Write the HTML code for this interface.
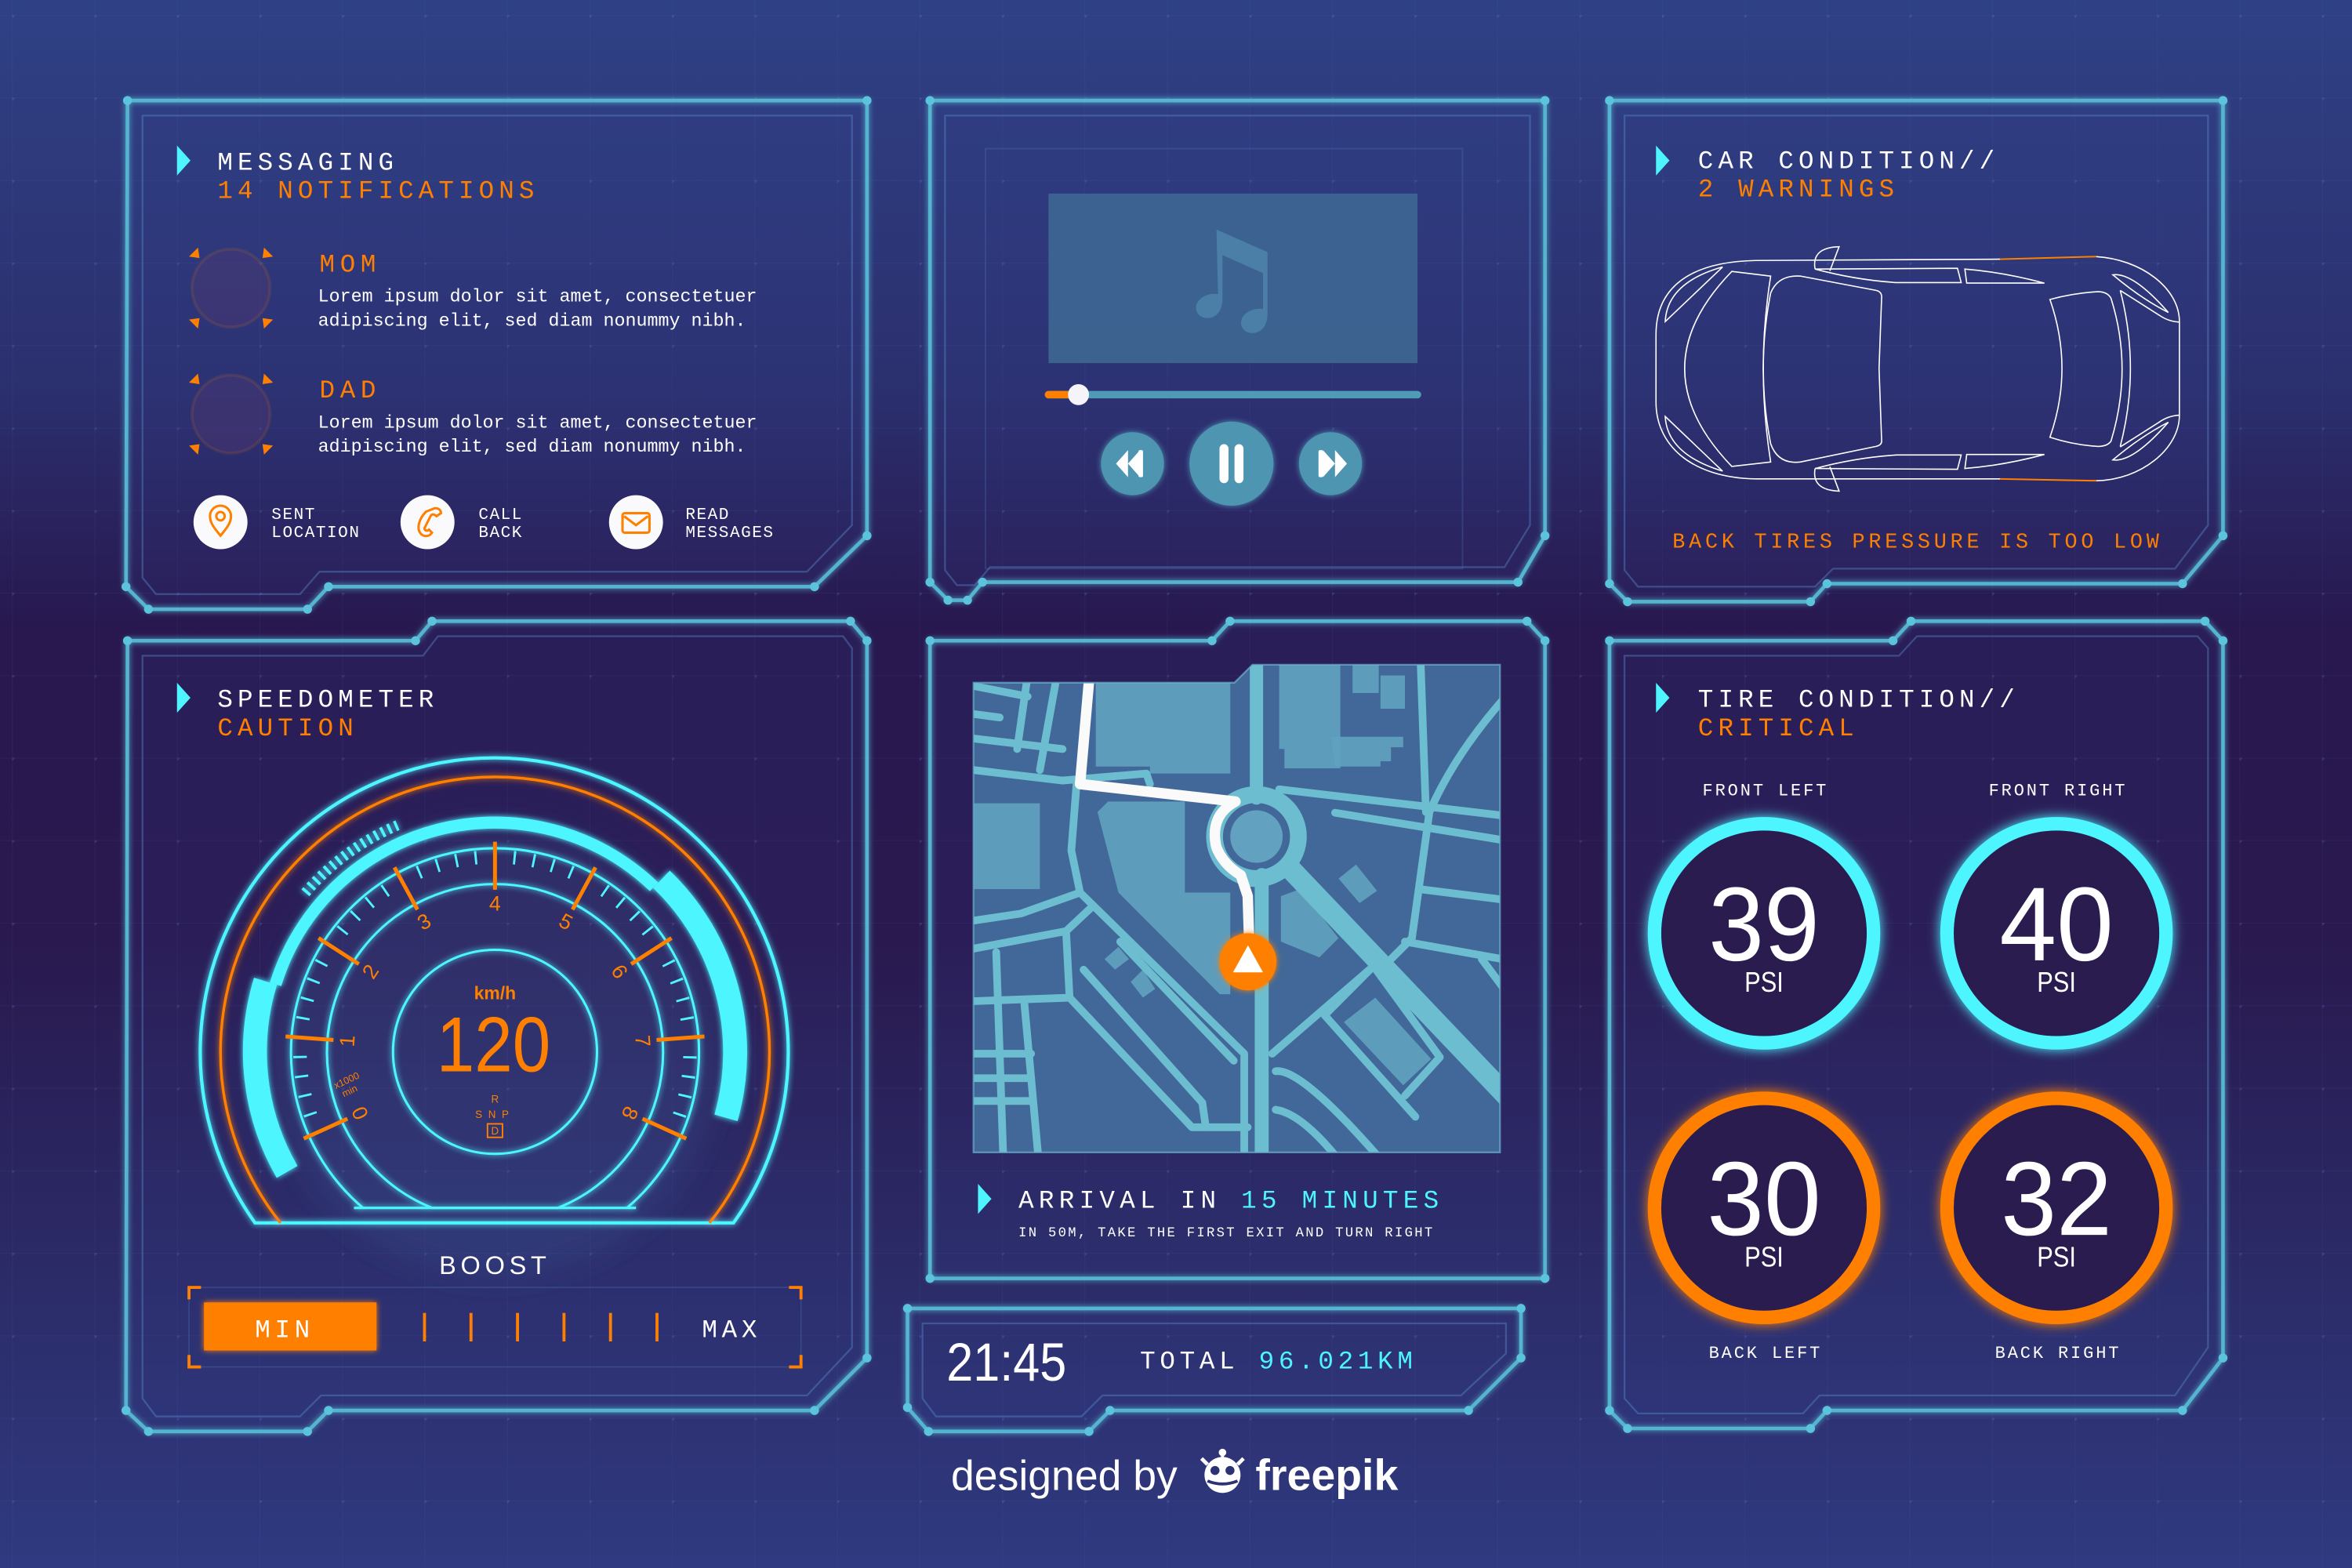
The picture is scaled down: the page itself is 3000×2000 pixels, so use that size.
<!DOCTYPE html>
<html><head><meta charset="utf-8"><style>
html,body{margin:0;padding:0;background:#2c2a66;}
svg{display:block}
.m{font-family:"Liberation Mono",monospace;}
.s{font-family:"Liberation Sans","DejaVu Sans",sans-serif;}
</style></head><body>
<svg width="3000" height="2000" viewBox="0 0 1568 1045" preserveAspectRatio="none" xmlns="http://www.w3.org/2000/svg">
<defs>
<linearGradient id="bg" x1="0" y1="0" x2="0" y2="1">
<stop offset="0" stop-color="#2f4185"/><stop offset="0.25" stop-color="#2b2f6e"/><stop offset="0.4" stop-color="#28184f"/><stop offset="0.6" stop-color="#29194f"/><stop offset="0.8" stop-color="#2b2a66"/><stop offset="1" stop-color="#2f3a80"/>
</linearGradient>
<pattern id="grid" width="55" height="55" patternUnits="userSpaceOnUse" x="8" y="10">
<path d="M0 0H55M0 0V55" stroke="#5f7fd0" stroke-opacity="0.08" stroke-width="1" fill="none"/>
<circle cx="0" cy="0" r="1.8" fill="#7a9ae0" fill-opacity="0.18"/>
</pattern>
<filter id="glow" x="-30%" y="-30%" width="160%" height="160%"><feGaussianBlur stdDeviation="4" result="b"/><feMerge><feMergeNode in="b"/><feMergeNode in="SourceGraphic"/></feMerge></filter>
<filter id="glow2" x="-30%" y="-30%" width="160%" height="160%"><feGaussianBlur stdDeviation="2" result="b"/><feMerge><feMergeNode in="b"/><feMergeNode in="SourceGraphic"/></feMerge></filter>
<filter id="soft"><feGaussianBlur stdDeviation="10"/></filter>
</defs>
<rect width="1568" height="1045" fill="url(#bg)"/>
<rect width="1568" height="1045" fill="url(#grid)"/>

<g fill="#3a4a9a" fill-opacity="0.12">
<path d="M85,67H578V357L543,391H219L205,406H99L84,391Z"/>
<path d="M620,67H1030V357L1012,388H655L645,400H632L620,388Z"/>
<path d="M1073,67H1482V357L1455,389H1218L1207,401H1085L1073,389Z"/>
<path d="M85,427H277L288,414H567L578,427V905L543,940H219L205,954H99L84,940Z"/>
<path d="M620,427H808L820,414H1018L1030,427V852H620Z"/>
<path d="M1073,427H1262L1274,414H1470L1482,427V905L1455,940H1218L1207,952H1085L1073,940Z"/>
<path d="M605,872H1014V905L979,940H740L726,954H619L605,938Z"/>
</g>
<g fill="none" stroke="#55b5d0" stroke-width="2.4" filter="url(#glow2)">
<path d="M85,67H578V357L543,391H219L205,406H99L84,391Z"/>
<path d="M620,67H1030V357L1012,388H655L645,400H632L620,388Z"/>
<path d="M1073,67H1482V357L1455,389H1218L1207,401H1085L1073,389Z"/>
<path d="M85,427H277L288,414H567L578,427V905L543,940H219L205,954H99L84,940Z"/>
<path d="M620,427H808L820,414H1018L1030,427V852H620Z"/>
<path d="M1073,427H1262L1274,414H1470L1482,427V905L1455,940H1218L1207,952H1085L1073,940Z"/>
<path d="M605,872H1014V905L979,940H740L726,954H619L605,938Z"/>
</g>
<g fill="none" stroke="#5a8fd0" stroke-opacity="0.4" stroke-width="1.2">
<path d="M95,77H568V350L538,381H213L200,396H104L95,385Z"/>
<path d="M630,77H1020V350L1003,378H660L650,390H638L630,380Z"/>
<path d="M1083,77H1472V350L1450,379H1222L1210,391H1092L1083,380Z"/>
<path d="M95,437H282L292,424H562L568,432V898L538,930H214L200,944H104L95,932Z"/>
<path d="M615,882H1004V902L974,930H735L721,944H624L615,932Z"/>
<path d="M1083,437H1266L1278,424H1465L1472,432V898L1450,930H1213L1202,942H1092L1083,932Z"/>
</g>
<g fill="#5cc3dc">
<circle cx="85" cy="67" r="3"/><circle cx="578" cy="67" r="3"/><circle cx="578" cy="357" r="3"/><circle cx="543" cy="391" r="3"/><circle cx="219" cy="391" r="3"/><circle cx="205" cy="406" r="3"/><circle cx="99" cy="406" r="3"/><circle cx="84" cy="391" r="3"/>
<circle cx="620" cy="67" r="3"/><circle cx="1030" cy="67" r="3"/><circle cx="1030" cy="357" r="3"/><circle cx="1012" cy="388" r="3"/><circle cx="655" cy="388" r="3"/><circle cx="645" cy="400" r="3"/><circle cx="632" cy="400" r="3"/><circle cx="620" cy="388" r="3"/>
<circle cx="1073" cy="67" r="3"/><circle cx="1482" cy="67" r="3"/><circle cx="1482" cy="357" r="3"/><circle cx="1455" cy="389" r="3"/><circle cx="1218" cy="389" r="3"/><circle cx="1207" cy="401" r="3"/><circle cx="1085" cy="401" r="3"/><circle cx="1073" cy="389" r="3"/>
<circle cx="85" cy="427" r="3"/><circle cx="277" cy="427" r="3"/><circle cx="288" cy="414" r="3"/><circle cx="567" cy="414" r="3"/><circle cx="578" cy="427" r="3"/><circle cx="578" cy="905" r="3"/><circle cx="543" cy="940" r="3"/><circle cx="219" cy="940" r="3"/><circle cx="205" cy="954" r="3"/><circle cx="99" cy="954" r="3"/><circle cx="84" cy="940" r="3"/>
<circle cx="620" cy="427" r="3"/><circle cx="808" cy="427" r="3"/><circle cx="820" cy="414" r="3"/><circle cx="1018" cy="414" r="3"/><circle cx="1030" cy="427" r="3"/><circle cx="1030" cy="852" r="3"/><circle cx="620" cy="852" r="3"/>
<circle cx="1073" cy="427" r="3"/><circle cx="1262" cy="427" r="3"/><circle cx="1274" cy="414" r="3"/><circle cx="1470" cy="414" r="3"/><circle cx="1482" cy="427" r="3"/><circle cx="1482" cy="905" r="3"/><circle cx="1455" cy="940" r="3"/><circle cx="1218" cy="940" r="3"/><circle cx="1207" cy="952" r="3"/><circle cx="1085" cy="952" r="3"/><circle cx="1073" cy="940" r="3"/>
<circle cx="605" cy="872" r="3"/><circle cx="1014" cy="872" r="3"/><circle cx="1014" cy="905" r="3"/><circle cx="979" cy="940" r="3"/><circle cx="740" cy="940" r="3"/><circle cx="726" cy="954" r="3"/><circle cx="619" cy="954" r="3"/><circle cx="605" cy="938" r="3"/>
</g>

<!-- MESSAGING -->
<path d="M118,97L127,107L118,117Z" fill="#4ef5ff"/>
<g class="m" font-size="17" letter-spacing="3.2">
<text x="145" y="113" fill="#fff">MESSAGING</text>
<text x="145" y="132" fill="#ff8000">14 NOTIFICATIONS</text>
</g>
<g>
<circle cx="154" cy="192" r="26" fill="#5a3a70" fill-opacity="0.35" stroke="#ff8000" stroke-opacity="0.12" stroke-width="2"/>
<circle cx="154" cy="276" r="26" fill="#5a3a70" fill-opacity="0.35" stroke="#ff8000" stroke-opacity="0.12" stroke-width="2"/>
<g fill="#ff8000">
<path d="M126,171l6,-6l1,7z"/><path d="M182,171l-6,-6l-1,7z"/><path d="M126,213l6,6l1,-7z"/><path d="M182,213l-6,6l-1,-7z"/>
<path d="M126,255l6,-6l1,7z"/><path d="M182,255l-6,-6l-1,7z"/><path d="M126,297l6,6l1,-7z"/><path d="M182,297l-6,6l-1,-7z"/>
</g>
</g>
<g class="m">
<text x="213" y="181" fill="#ff8000" font-size="17" letter-spacing="3.5">MOM</text>
<text x="212" y="201" fill="#fff" font-size="12.2">Lorem ipsum dolor sit amet, consectetuer</text>
<text x="212" y="217" fill="#fff" font-size="12.2">adipiscing elit, sed diam nonummy nibh.</text>
<text x="213" y="265" fill="#ff8000" font-size="17" letter-spacing="3.5">DAD</text>
<text x="212" y="285" fill="#fff" font-size="12.2">Lorem ipsum dolor sit amet, consectetuer</text>
<text x="212" y="301" fill="#fff" font-size="12.2">adipiscing elit, sed diam nonummy nibh.</text>
</g>
<g fill="#fafafc">
<circle cx="147" cy="348" r="18"/><circle cx="285" cy="348" r="18"/><circle cx="424" cy="348" r="18"/>
</g>
<g fill="none" stroke="#ff8000" stroke-width="1.6">
<path d="M147,357C142,351 140,348 140,344A7,7 0 0 1 154,344C154,348 152,351 147,357Z"/><circle cx="147" cy="344" r="2.8"/>
<path d="M289,339C292,338 294,340 294,342L291,344C290,343 288,342 287,344L283,352C283,354 285,354 286,353L288,355C286,358 282,358 280,355C278,352 279,346 284,341Z"/>
<rect x="415" y="342" width="18" height="13" rx="1.5"/><path d="M416,344L424,350L432,344"/>
</g>
<g class="m" font-size="11" fill="#fff" letter-spacing="0.8">
<text x="181" y="346">SENT</text><text x="181" y="358">LOCATION</text>
<text x="319" y="346">CALL</text><text x="319" y="358">BACK</text>
<text x="457" y="346">READ</text><text x="457" y="358">MESSAGES</text>
</g>

<!-- MUSIC -->
<rect x="657" y="99" width="318" height="280" fill="none" stroke="#5a7fc8" stroke-opacity="0.25"/>
<rect x="699" y="129" width="246" height="113" fill="#3e6794" fill-opacity="0.9"/>
<path d="M811,153L845,168V209C845,218 840,222 835,222C829,222 826,217 828,212C830,208 836,205 842,206V182L815,170V199C815,208 810,212 805,212C799,212 796,207 798,202C800,198 806,195 812,196Z" fill="#4b7fa8"/>
<line x1="699" y1="263" x2="945" y2="263" stroke="#4f9bb5" stroke-width="5" stroke-linecap="round"/>
<line x1="699" y1="263" x2="716" y2="263" stroke="#ff8000" stroke-width="5" stroke-linecap="round"/>
<circle cx="719" cy="263" r="7" fill="#f4f4fa"/>
<g fill="#4d95b1" filter="url(#glow2)">
<circle cx="755" cy="309" r="21"/><circle cx="821" cy="309" r="28"/><circle cx="887" cy="309" r="21"/>
</g>
<g fill="#fff">
<rect x="813" y="296" width="6" height="26" rx="3"/><rect x="823" y="296" width="6" height="26" rx="3"/>
<path d="M744,309L752,300V318Z"/><path d="M752,309L760,300V318Z" /><rect x="759" y="300" width="3" height="18" rx="1"/>
<path d="M898,309L890,300V318Z"/><path d="M890,309L882,300V318Z"/><rect x="879" y="300" width="3" height="18" rx="1"/>
</g>

<!-- CAR -->
<path d="M1104,97L1113,107L1104,117Z" fill="#4ef5ff"/>
<g class="m" font-size="17" letter-spacing="3.2">
<text x="1132" y="112" fill="#fff">CAR CONDITION//</text>
<text x="1132" y="131" fill="#ff8000">2 WARNINGS</text>
</g>
<g transform="translate(1104,171) scale(0.2466,0.1733) translate(-110,-80)" fill="none" stroke="#fff" stroke-width="1.6">
<path vector-effect="non-scaling-stroke" d="M1040,90L380,95C200,100 110,200 110,380L110,640C110,800 200,930 380,935L1040,935"/>
<path vector-effect="non-scaling-stroke" d="M1300,80C1420,90 1525,200 1525,330L1525,690C1525,820 1420,940 1300,942"/>
<path vector-effect="non-scaling-stroke" d="M1040,90L1300,80M1040,935L1300,942" stroke="#ff8000" stroke-width="2"/>
<path vector-effect="non-scaling-stroke" d="M500,155L705,210Q720,215 720,235L713,510L720,790Q720,805 705,810L500,870Q440,880 420,800Q380,510 420,220Q440,150 500,155Z"/>
<path vector-effect="non-scaling-stroke" d="M315,137L420,155Q380,510 420,870L315,887Q60,510 315,137Z"/>
<path vector-effect="non-scaling-stroke" d="M290,120L135,330Q140,180 290,120Z"/>
<path vector-effect="non-scaling-stroke" d="M290,905L135,695Q140,840 290,905Z"/>
<path vector-effect="non-scaling-stroke" d="M540,128L925,125L935,180L760,180Q650,170 540,128Z"/>
<path vector-effect="non-scaling-stroke" d="M945,128Q1050,140 1160,182L950,182Z"/>
<path vector-effect="non-scaling-stroke" d="M540,895L925,898L935,843L760,843Q650,853 540,895Z"/>
<path vector-effect="non-scaling-stroke" d="M945,895Q1050,883 1160,841L950,841Z"/>
<path vector-effect="non-scaling-stroke" d="M540,128Q530,45 605,42L580,135"/>
<path vector-effect="non-scaling-stroke" d="M540,895Q530,978 605,982L580,888"/>
<path vector-effect="non-scaling-stroke" d="M1175,245Q1240,220 1305,215Q1330,215 1340,240Q1400,510 1340,790Q1330,810 1305,810Q1240,805 1175,775Q1240,510 1175,245Z"/>
<path vector-effect="non-scaling-stroke" d="M1365,210Q1420,510 1365,810"/>
<path vector-effect="non-scaling-stroke" d="M1345,150Q1400,140 1495,295Q1420,240 1345,150Z"/>
<path vector-effect="non-scaling-stroke" d="M1345,862Q1400,872 1495,717Q1420,772 1345,862Z"/>
<path vector-effect="non-scaling-stroke" d="M1365,210L1470,305Q1495,330 1525,332"/>
<path vector-effect="non-scaling-stroke" d="M1365,812L1470,717Q1495,692 1525,690"/>
</g>
<text class="m" x="1115" y="365" fill="#ff8000" font-size="14" letter-spacing="2.5">BACK TIRES PRESSURE IS TOO LOW</text>

<!-- SPEEDOMETER -->
<path d="M118,455L127,465L118,475Z" fill="#4ef5ff"/>
<g class="m" font-size="17" letter-spacing="3.2">
<text x="145" y="471" fill="#fff">SPEEDOMETER</text>
<text x="145" y="490" fill="#ff8000">CAUTION</text>
</g>
<circle cx="330" cy="701" r="150" fill="#3b5a9c" fill-opacity="0.25" filter="url(#soft)"/>
<g fill="none" filter="url(#glow2)">
<path d="M170,815A196,196 0 1 1 489,815Z" stroke="#4ef5ff" stroke-width="2.2"/>
<path d="M187,815A183,183 0 1 1 473,815" stroke="#ff8000" stroke-width="1.8"/>
<path d="M183.7,656A153,153 0 0 1 436,591" stroke="#4ef5ff" stroke-width="8"/>
<path d="M191.4,781A160,160 0 0 1 177,654" stroke="#4ef5ff" stroke-width="16"/>
<path d="M441,586A160,160 0 0 1 484,745" stroke="#4ef5ff" stroke-width="16"/>
<path d="M203.6,595A165,165 0 0 1 265,550" stroke="#4ef5ff" stroke-width="7" stroke-dasharray="2 3"/>
<path d="M236,805L242,805A136,136 0 1 1 418,805L424,805Z" stroke="#4ef5ff" stroke-width="1.6"/>
<path d="M288,805A112,112 0 1 1 372,805Z" stroke="#4ef5ff" stroke-width="1.6"/>
<circle cx="330" cy="701" r="68" stroke="#4ef5ff" stroke-width="1.6"/>
</g>
<path d="M211.6,754.7A130,130 0 1 1 448.4,754.7" fill="none" stroke="#4ef5ff" stroke-width="9" stroke-dasharray="1.5 11.48" stroke-dashoffset="0.75"/>
<g stroke="#ff8000" stroke-width="2.6">
<line x1="330" y1="561" x2="330" y2="593" transform="rotate(-114.4 330 701)"/>
<line x1="330" y1="561" x2="330" y2="593" transform="rotate(-85.8 330 701)"/>
<line x1="330" y1="561" x2="330" y2="593" transform="rotate(-57.2 330 701)"/>
<line x1="330" y1="561" x2="330" y2="593" transform="rotate(-28.6 330 701)"/>
<line x1="330" y1="561" x2="330" y2="593" transform="rotate(0 330 701)"/>
<line x1="330" y1="561" x2="330" y2="593" transform="rotate(28.6 330 701)"/>
<line x1="330" y1="561" x2="330" y2="593" transform="rotate(57.2 330 701)"/>
<line x1="330" y1="561" x2="330" y2="593" transform="rotate(85.8 330 701)"/>
<line x1="330" y1="561" x2="330" y2="593" transform="rotate(114.4 330 701)"/>
</g>
<g class="s" font-size="14" fill="#ff8000" text-anchor="middle">
<text x="330" y="607" transform="rotate(-114.4 330 701)">0</text>
<text x="330" y="607" transform="rotate(-85.8 330 701)">1</text>
<text x="330" y="607" transform="rotate(-57.2 330 701)">2</text>
<text x="330" y="607" transform="rotate(-28.6 330 701)">3</text>
<text x="330" y="607">4</text>
<text x="330" y="607" transform="rotate(28.6 330 701)">5</text>
<text x="330" y="607" transform="rotate(57.2 330 701)">6</text>
<text x="330" y="607" transform="rotate(85.8 330 701)">7</text>
<text x="330" y="607" transform="rotate(114.4 330 701)">8</text>
<text x="232" y="722" font-size="6.5" transform="rotate(-25 232 722)">x1000</text>
<text x="234" y="729" font-size="6.5" transform="rotate(-25 234 729)">min</text>
<text x="330" y="666" font-size="12" font-weight="bold">km/h</text>
<text x="329" y="714" font-size="52" textLength="76" lengthAdjust="spacingAndGlyphs">120</text>
<text x="330" y="735" font-size="7">R</text>
<text x="330" y="745" font-size="7" letter-spacing="4">SNP</text>
<text x="330" y="756" font-size="7">D</text>
</g>
<rect x="325" y="749" width="10" height="9" fill="none" stroke="#ff8000" stroke-width="1"/>
<text class="s" x="330" y="849" fill="#fff" font-size="17" letter-spacing="3" text-anchor="middle">BOOST</text>
<rect x="126" y="858" width="408" height="53" fill="none" stroke="#5a80c8" stroke-opacity="0.3" stroke-width="0.8"/>
<g fill="none" stroke="#ff8000" stroke-width="2">
<path d="M126,866V858H134"/><path d="M534,866V858H526"/><path d="M126,903V911H134"/><path d="M534,903V911H526"/>
</g>
<rect x="136" y="868" width="115" height="32" fill="#ff8000" filter="url(#glow2)"/>
<g stroke="#ff8000" stroke-width="2">
<line x1="283" y1="875" x2="283" y2="894"/><line x1="314" y1="875" x2="314" y2="894"/><line x1="345" y1="875" x2="345" y2="894"/><line x1="376" y1="875" x2="376" y2="894"/><line x1="407" y1="875" x2="407" y2="894"/><line x1="438" y1="875" x2="438" y2="894"/>
</g>
<g class="m" font-size="17" fill="#fff" letter-spacing="3">
<text x="170" y="891">MIN</text><text x="468" y="891">MAX</text>
</g>

<!-- MAP -->
<clipPath id="mapclip"><path d="M649,455H823L835,443H1000V768H649Z"/></clipPath>
<g clip-path="url(#mapclip)">
<rect x="649" y="443" width="351" height="325" fill="#416898"/>
<g transform="translate(649,442) scale(0.2329,0.2334) translate(-25,-35)">
<g fill="#62a2c0" fill-opacity="0.9">
<path d="M375,90H760V350H530V330H375Z"/>
<rect x="25" y="435" width="190" height="245"/>
<path d="M380,460L410,430H630V690H760V980H730L440,690Z"/>
<path d="M900,35H1075V335H915V280H900Z"/>
<rect x="1110" y="35" width="75" height="85"/><rect x="1190" y="70" width="70" height="95"/>
<path d="M1050,245H1255V275H1220V315H1190V330H1060Z"/>
<path d="M1070,650L1120,610L1180,685L1130,720Z"/>
<path d="M905,700L960,680L1070,820L1015,875L905,830Z"/>
<path d="M1085,1060L1175,990L1335,1165L1255,1240Z"/>
<path d="M400,880L440,845L470,880L430,910Z"/><path d="M475,945L510,910L545,965L510,990Z"/>
</g>
<g fill="none" stroke="#6cbdd0" stroke-width="22" stroke-linecap="round" stroke-linejoin="round">
<path d="M835,35L835,420" stroke-width="38"/>
<path d="M850,640L850,1440" stroke-width="40"/>
<path d="M930,620L1560,1280" stroke-width="60"/>
<path d="M900,395L1540,470"/>
<path d="M1060,462L1540,540"/>
<path d="M1330,460Q1400,300 1540,140"/>
<path d="M1330,460L1280,820L1200,900"/>
<path d="M1300,680L1540,710"/>
<path d="M1260,830L1540,880"/>
<path d="M1305,35L1320,460"/>
<path d="M320,380L305,570L330,690L800,1150L800,1440"/>
<path d="M330,690L160,750L25,770"/>
<path d="M25,850L290,800L300,990L25,1000"/>
<path d="M365,730L290,800"/>
<path d="M300,990L650,1360L810,1360"/>
<path d="M340,910L680,1290L690,1360"/>
<path d="M445,830L770,1170"/>
<path d="M25,340L280,370L520,350L530,380"/>
<path d="M25,250L280,280"/>
<path d="M25,100L180,130"/>
<path d="M25,180L100,190"/>
<path d="M185,35L150,280"/>
<path d="M270,35L215,340"/>
<path d="M25,1150L190,1150M25,1220L190,1220M25,1285L190,1285"/>
<path d="M90,860L110,1440M170,1000L210,1440"/>
<path d="M880,1150L1170,900L1360,1160L1260,1270"/>
<path d="M1170,900L1030,1040L1290,1330"/>
<path d="M890,1200Q960,1190 1180,1440"/>
<path d="M890,1310Q960,1320 1060,1440"/>
<path d="M1480,880L1540,960"/>
</g>
<circle cx="835" cy="530" r="120" fill="none" stroke="#6cbdd0" stroke-width="48"/>
<circle cx="835" cy="530" r="75" fill="#62a2c0"/>
<path d="M360,35L330,380L775,430Q700,470 720,560Q740,610 790,640L810,700L815,860" fill="none" stroke="#fafafa" stroke-width="30" stroke-linejoin="round"/>
</g>
</g>
<path d="M649,455H823L835,443H1000V768H649Z" fill="none" stroke="#6ab5cf" stroke-opacity="0.7" stroke-width="1.2"/>
<circle cx="832" cy="641" r="19" fill="#ff8000" filter="url(#glow2)"/>
<path d="M832,630L842,648H822Z" fill="#fff"/>
<path d="M652,789L661,799L652,809Z" fill="#4ef5ff"/>
<text class="m" x="679" y="805" font-size="17" letter-spacing="3.3" fill="#fff">ARRIVAL IN <tspan fill="#4ef5ff">15 MINUTES</tspan></text>
<text class="m" x="679" y="824" font-size="9" letter-spacing="1.2" fill="#fff">IN 50M, TAKE THE FIRST EXIT AND TURN RIGHT</text>

<!-- TIME -->
<text class="s" x="631" y="920" font-size="36" fill="#fff" textLength="80" lengthAdjust="spacingAndGlyphs">21:45</text>
<text class="m" x="760" y="912" font-size="17" letter-spacing="3" fill="#fff">TOTAL <tspan fill="#4ef5ff">96.021KM</tspan></text>

<!-- TIRES -->
<path d="M1104,455L1113,465L1104,475Z" fill="#4ef5ff"/>
<g class="m" font-size="17" letter-spacing="3.2">
<text x="1132" y="471" fill="#fff">TIRE CONDITION//</text>
<text x="1132" y="490" fill="#ff8000">CRITICAL</text>
</g>
<g class="m" font-size="11.5" fill="#fff" letter-spacing="1.5" text-anchor="middle">
<text x="1177" y="530">FRONT LEFT</text><text x="1372" y="530">FRONT RIGHT</text>
<text x="1177" y="905">BACK LEFT</text><text x="1372" y="905">BACK RIGHT</text>
</g>
<g fill="#291a50" stroke-width="9" filter="url(#glow)">
<circle cx="1176" cy="622" r="73" stroke="#4ef5ff"/>
<circle cx="1371" cy="622" r="73" stroke="#4ef5ff"/>
<circle cx="1176" cy="805" r="73" stroke="#ff8000"/>
<circle cx="1371" cy="805" r="73" stroke="#ff8000"/>
</g>
<g class="s" fill="#fff" text-anchor="middle">
<text x="1176" y="640" font-size="70" textLength="74" lengthAdjust="spacingAndGlyphs">39</text><text x="1371" y="640" font-size="70" textLength="76" lengthAdjust="spacingAndGlyphs">40</text>
<text x="1176" y="823" font-size="70" textLength="76" lengthAdjust="spacingAndGlyphs">30</text><text x="1371" y="823" font-size="70" textLength="74" lengthAdjust="spacingAndGlyphs">32</text>
<g font-size="19"><text x="1176" y="661" textLength="26" lengthAdjust="spacingAndGlyphs">PSI</text><text x="1371" y="661" textLength="26" lengthAdjust="spacingAndGlyphs">PSI</text><text x="1176" y="844" textLength="26" lengthAdjust="spacingAndGlyphs">PSI</text><text x="1371" y="844" textLength="26" lengthAdjust="spacingAndGlyphs">PSI</text></g>
</g>

<!-- freepik -->
<text class="s" x="634" y="993" font-size="28" fill="#fff">designed by</text>
<g fill="#fff">
<circle cx="815" cy="983" r="12"/>
<circle cx="815" cy="968" r="2.5"/><rect x="814" y="968" width="2" height="5"/>
<path d="M801,972l4,4M829,972l-4,4" stroke="#fff" stroke-width="2.5"/>
</g>
<circle cx="810" cy="980" r="3" fill="#2c3273"/><circle cx="820" cy="980" r="3" fill="#2c3273"/>
<path d="M805,987Q815,991 825,987" stroke="#2c3273" stroke-width="2" fill="none"/>
<text class="s" x="837" y="993" font-size="29" font-weight="bold" fill="#fff">freepik</text>
</svg>
</body></html>
